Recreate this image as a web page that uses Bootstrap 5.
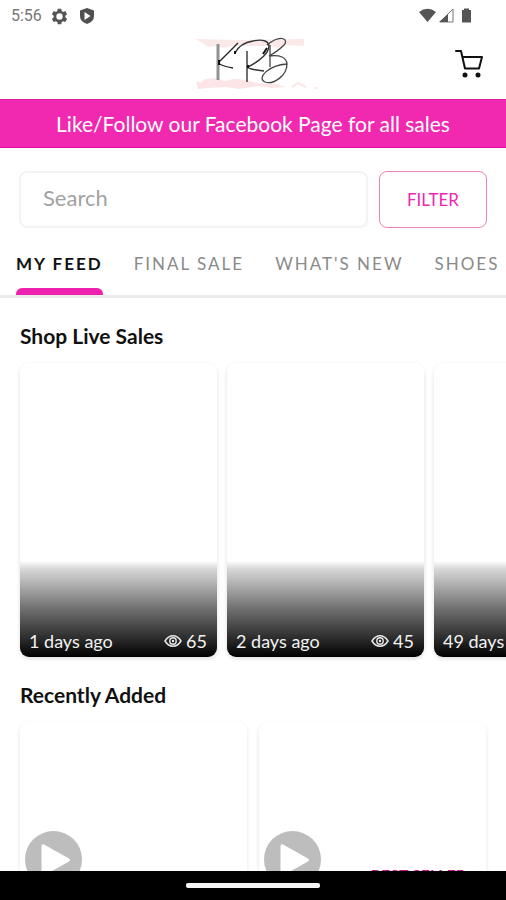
<!DOCTYPE html>
<html lang="en">
<head>
<meta charset="utf-8">
<meta name="viewport" content="width=device-width, initial-scale=1">
<title>KRB</title>
<link href="https://cdn.jsdelivr.net/npm/bootstrap@5.3.0/dist/css/bootstrap.min.css" rel="stylesheet">
<style>
body { font-family: Lato, "Open Sans", sans-serif; color: #111; background: #fff; }
svg { display: block; flex-shrink: 0; }
.status-bar { height: 32px; padding: 0 32px 0 11px; gap: 9px; font: 16px/32px Roboto, sans-serif; color: #777; }
.brand-bar { display: grid; grid-template-columns: 1fr auto 1fr; height: 67px; padding: 0 20px 4px; }
.promo { background: #f029b0; border-top: 1px solid #d91a9c; border-bottom: 1px solid #e80ca3; color: #fff; font-size: 21px; line-height: 47px; }
.search-row { padding: 23px 19px 0; gap: 11px; }
.search-box { height: 57px; padding: 0 22px 4px; border: 2px solid #f3f3f3; border-radius: 8px; font-size: 22px; }
.search-box::placeholder { color: #a2a2a2; }
.btn-filter { width: 108px; height: 57px; border: 1px solid #ef82bb; border-radius: 8px; color: #ee27ae; font-size: 17px; }
.feed-tabs { gap: 31px; padding: 0 16px; margin-top: 19px; border-bottom: 3px solid #ebebeb; overflow: hidden; }
.feed-tabs .nav-link { position: relative; padding: 0; height: 48px; line-height: 34px; font-size: 17px; letter-spacing: 2px; color: #8a8a8a; white-space: nowrap; }
.feed-tabs .nav-link.active { color: #111; font-weight: 700; }
.feed-tabs .nav-link.active::after { content: ""; position: absolute; left: 0; right: 0; bottom: 0; height: 7px; border-radius: 6px 6px 0 0; background: #ee20ae; }
.section-title { font-size: 21px; line-height: 28px; font-weight: 700; margin: 0 0 13px; padding: 0 20px; }
.strip { padding: 4px 20px; margin: -4px 0; overflow: hidden; }
.strip-live { gap: 10px; }
.strip-items { gap: 12px; }
.live-card { flex: 0 0 197px; height: 294px; border-radius: 9px; overflow: hidden; box-shadow: 0 2px 4px #e0e0e0; color: #f2f2f2; }
.live-info { height: 96px; padding: 0 10px 3px 9px; font-size: 18px; line-height: 26px; white-space: nowrap; background: linear-gradient(#fff, #d8d8d8 8%, #6f6f6f 50%, #222 85%, #000); }
.item-card { flex: 1 0 0; height: 294px; border-radius: 9px; box-shadow: 0 2px 4px #e4e4e4; padding: 109px 20px 0 5px; }
.play-btn { width: 57px; height: 57px; }
.flag { color: #c2187f; font-size: 16px; line-height: 20px; font-weight: 700; margin-top: 34px; }
.gesture-bar { height: 29px; background: #000; }
.gesture-pill { width: 134px; height: 5px; background: #f5f5f5; border-radius: 2px; }
</style>
</head>
<body>
<svg class="d-none" aria-hidden="true">
  <symbol id="eye" viewBox="0 0 18 14"><path d="M1 7C3.500 3 6 1.800 9 1.800S14.500 3 17 7C14.500 11 12 12.200 9 12.200S3.500 11 1 7Z" fill="none" stroke="#e8e8e8" stroke-width="1.500"/><circle cx="9" cy="7" r="3.200" fill="none" stroke="#e8e8e8" stroke-width="1.400"/><circle cx="9" cy="7" r="1.200" fill="#e8e8e8"/></symbol>
  <symbol id="play" viewBox="0 0 57 57"><circle cx="28.500" cy="28.500" r="28.500" fill="#bdbdbd"/><path d="M17 15Q17 13 19 14L44 28Q45 29 44 30L19 44Q17 45 17 43Z" fill="#fff" stroke="#fff"/></symbol>
</svg>
<div class="vh-100 d-flex flex-column overflow-hidden">
  <div class="status-bar d-flex align-items-center flex-shrink-0">
    <span>5:56</span>
    <svg width="17" height="17" viewBox="0 0 24 24" fill="#555"><path fill-rule="evenodd" d="M9.500 1h5l.6 3.300 2 1.200L20.200 4.400l2.500 4.300-2.500 2.200v2.300l2.500 2.200-2.500 4.300-3.100-1.100-2 1.200-.6 3.200h-5l-.6-3.200-2-1.200-3.100 1.100-2.500-4.300 2.500-2.200v-2.300L1.300 8.700l2.500-4.300 3.100 1.100 2-1.200zM12 7.500a4.500 4.500 0 1 0 0 9 4.500 4.500 0 0 0 0-9z"/></svg>
    <svg class="me-auto" width="20" height="18" viewBox="0 0 20 18"><path d="M10 1 17 3.500V9Q17 14.500 10 17 3 14.500 3 9V3.500Z" fill="#505050"/><path d="M7.500 5 13.500 9 7.500 13Z" fill="#fff"/></svg>
    <svg width="56" height="18" viewBox="0 0 56 18"><path d="M1 5Q9.500-1.500 18 5L9.500 15Z" fill="#555"/><path d="M35 2V15H22Z" fill="#fff" stroke="#777"/><path d="M30 7V15H21Z" fill="#555"/><path d="M46 1.500h5V3h2v12.500h-9V3h2Z" fill="#555"/></svg>
  </div>
  <header class="brand-bar align-items-center flex-shrink-0">
    <span></span>
    <a href="#" aria-label="KRB home">
      <svg width="130" height="54" viewBox="-8 0 130 54" fill="none">
        <path d="M0 2 40 3 108 2V9L90 8 82 11 76 9H36L28 11 20 9 12 10 6 6Z" fill="#fbe9ea"/>
        <path d="M0 44 5 46 9 42 21 41 28 44 38 42 51 43 60 46 80 47 90 50 75 51 62 49 43 52 29 50 12 51 2 52Z" fill="#fbe5e7"/>
        <path d="M96 50 102 46 110 50M118 51h3" stroke="#fbe7e8" stroke-width="2"/>
        <path d="M22 7V43" stroke="#929292" stroke-width="3"/>
        <path d="M42 6 23 25Q21 28 37 31" stroke="#222" stroke-width="1.300"/>
        <path d="M51 14V45M39 16Q44 6 57 4C78-1 80 16 52 30Q51 32 68 34" stroke="#333" stroke-width="1.400"/>
        <path d="M74 8V30M71 8C86-4 94 3 87 9Q82 14 73 19Q90 17 91 27C91 39 77 48 69 45C60 41 73 28 91 27" stroke="#444" stroke-width="1.300"/>
        <path d="M39 14v3M23 23v5M52 28v3M71 11l-4 6" stroke="#111" stroke-width="2"/>
      </svg>
    </a>
    <a href="#" class="ms-auto" aria-label="Cart">
      <svg width="32" height="32" viewBox="0 0 32 32" fill="none" stroke="#111" stroke-width="2" stroke-linecap="round" stroke-linejoin="round"><path d="M2 3H7L11 20.500H25L28 9H8.500"/><circle cx="11" cy="27" r="1.500" fill="#111"/><circle cx="24" cy="27" r="1.500" fill="#111"/></svg>
    </a>
  </header>
  <div class="promo text-center flex-shrink-0">Like/Follow our Facebook Page for all sales</div>
  <form class="search-row d-flex flex-shrink-0">
    <input type="search" class="form-control search-box" placeholder="Search" aria-label="Search">
    <button type="button" class="btn btn-filter flex-shrink-0">FILTER</button>
  </form>
  <nav class="nav feed-tabs flex-nowrap flex-shrink-0">
    <a class="nav-link active" aria-current="page" href="#">MY FEED</a>
    <a class="nav-link" href="#">FINAL SALE</a>
    <a class="nav-link" href="#">WHAT'S NEW</a>
    <a class="nav-link" href="#">SHOES</a>
  </nav>
  <main class="flex-fill overflow-hidden pt-4">
    <h2 class="section-title">Shop Live Sales</h2>
    <div class="strip strip-live d-flex">
      <a href="#" class="live-card d-flex flex-column justify-content-end text-decoration-none">
        <span class="live-info d-flex align-items-end"><span>1 days ago</span><svg class="ms-auto me-1 mb-1" width="18" height="18" aria-label="Views"><use href="#eye"/></svg><span>65</span></span>
      </a>
      <a href="#" class="live-card d-flex flex-column justify-content-end text-decoration-none">
        <span class="live-info d-flex align-items-end"><span>2 days ago</span><svg class="ms-auto me-1 mb-1" width="18" height="18" aria-label="Views"><use href="#eye"/></svg><span>45</span></span>
      </a>
      <a href="#" class="live-card d-flex flex-column justify-content-end text-decoration-none">
        <span class="live-info d-flex align-items-end"><span>49 days</span></span>
      </a>
    </div>
    <h2 class="section-title mt-4">Recently Added</h2>
    <div class="strip strip-items d-flex">
      <article class="item-card d-flex align-items-start">
        <button type="button" class="btn p-0 border-0 play-btn" aria-label="Play"><svg width="57" height="57"><use href="#play"/></svg></button>
      </article>
      <article class="item-card d-flex align-items-start justify-content-between">
        <button type="button" class="btn p-0 border-0 play-btn" aria-label="Play"><svg width="57" height="57"><use href="#play"/></svg></button>
        <span class="flag">BEST SELLER</span>
      </article>
    </div>
  </main>
  <div class="gesture-bar d-flex justify-content-center align-items-center flex-shrink-0"><div class="gesture-pill"></div></div>
</div>
<script src="https://cdn.jsdelivr.net/npm/bootstrap@5.3.0/dist/js/bootstrap.bundle.min.js"></script>
</body>
</html>
